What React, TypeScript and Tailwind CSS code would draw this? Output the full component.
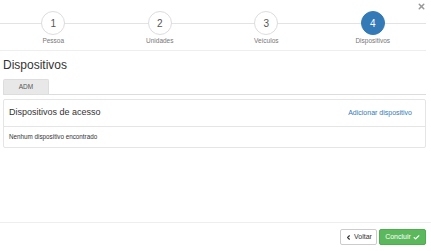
import React from 'react'
import { ChevronLeft, Check, X } from 'lucide-react'

const steps = [
  { n: 1, label: 'Pessoa' },
  { n: 2, label: 'Unidades' },
  { n: 3, label: 'Veículos' },
  { n: 4, label: 'Dispositivos', active: true },
]

export default function App() {
  return (
    <div className="relative flex h-[251px] w-[431px] flex-col bg-white font-['Liberation_Sans',Arial,sans-serif] text-[#333]">
      {/* close */}
      <button type="button" className="absolute right-[5px] top-[2px] z-10 text-[#999]">
        <X size={9} strokeWidth={4} />
      </button>

      {/* Stepper */}
      <div className="mr-[5px] h-[51px] border-b border-[#eee]">
        <div className="relative grid grid-cols-4">
          <div className="absolute left-0 right-0 top-[23px] h-px bg-[#e3e3e3]" />
          {steps.map((s) => (
            <div key={s.n} className="relative flex flex-col items-center">
              <div
                className={
                  s.active
                    ? 'mt-[11px] flex h-6 w-6 items-center justify-center rounded-full border border-[#337ab7] bg-[#337ab7] text-[10px] text-white'
                    : 'mt-[11px] flex h-6 w-6 items-center justify-center rounded-full border border-[#ddd] bg-white text-[10px] text-[#555]'
                }
              >
                {s.n}
              </div>
              <div className="mt-[2px] text-[6.5px] leading-[8px] text-[#777]">{s.label}</div>
            </div>
          ))}
        </div>
      </div>

      <h4 className="ml-[3px] mt-[7px] text-[12px] leading-[14px] text-[#333]">Dispositivos</h4>

      {/* Tabs */}
      <div className="ml-[3px] mr-[5px] mt-[7px] flex border-b border-[#ddd]">
        <div className="flex h-[15px] w-[46px] items-center justify-center rounded-t-[2px] border border-b-0 border-[#ddd] bg-[#e8e8e8] text-[6.5px] text-[#555]">
          ADM
        </div>
      </div>

      {/* Panel */}
      <div className="ml-[3px] mr-[5px] mt-[4px] rounded-[2px] border border-[#e5e5e5]">
        <div className="flex h-[27px] items-center justify-between border-b border-[#e5e5e5] pl-[5px] pr-[13px]">
          <span className="text-[9px] text-[#333]">Dispositivos de acesso</span>
          <a className="text-[7px] text-[#337ab7]">Adicionar dispositivo</a>
        </div>
        <div className="flex h-[20px] items-center pl-[5px] text-[6.3px] text-[#333]">
          Nenhum dispositivo encontrado
        </div>
      </div>

      <div className="flex-1" />

      {/* Footer */}
      <div className="flex h-[29px] justify-end gap-[2px] border-t border-[#eee] pr-[5px] pt-[6px]">
        <button
          type="button"
          className="flex h-[16px] w-[37px] items-center justify-center gap-[2px] rounded-[2px] border border-[#ccc] bg-white text-[7px] text-[#333]"
        >
          <ChevronLeft size={7} strokeWidth={4} />
          Voltar
        </button>
        <button
          type="button"
          className="flex h-[16px] w-[47px] items-center justify-center gap-[2px] rounded-[2px] border border-[#4cae4c] bg-[#5cb85c] text-[7px] text-white"
        >
          Concluir
          <Check size={7} strokeWidth={4} />
        </button>
      </div>
    </div>
  )
}
